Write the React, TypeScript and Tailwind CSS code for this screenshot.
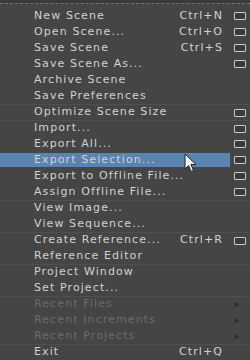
import React from "react";

interface Item {
  label: string;
  shortcut?: string;
  box?: boolean;
  sub?: boolean;
  disabled?: boolean;
  active?: boolean;
  sep?: boolean;
}

const items: Item[] = [
  { label: "New Scene", shortcut: "Ctrl+N", box: true },
  { label: "Open Scene...", shortcut: "Ctrl+O", box: true },
  { label: "Save Scene", shortcut: "Ctrl+S", box: true },
  { label: "Save Scene As...", box: true },
  { label: "Archive Scene" },
  { label: "Save Preferences" },
  { label: "Optimize Scene Size", box: true, sep: true },
  { label: "Import...", box: true, sep: true },
  { label: "Export All...", box: true },
  { label: "Export Selection...", box: true, active: true },
  { label: "Export to Offline File...", box: true },
  { label: "Assign Offline File...", box: true },
  { label: "View Image...", sep: true },
  { label: "View Sequence..." },
  { label: "Create Reference...", shortcut: "Ctrl+R", box: true, sep: true },
  { label: "Reference Editor" },
  { label: "Project Window", sep: true },
  { label: "Set Project..." },
  { label: "Recent Files", sub: true, disabled: true, sep: true },
  { label: "Recent Increments", sub: true, disabled: true },
  { label: "Recent Projects", sub: true, disabled: true },
  { label: "Exit", shortcut: "Ctrl+Q", sep: true },
];

function OptionBox() {
  return <div className="w-[12px] h-[8px] border-[1.5px] border-[#c8c8c8] bg-[#3a3a3a] rounded-[1px]" />;
}

function Cursor() {
  return (
    <svg className="absolute left-[184px] top-[153px]" width="14" height="20" viewBox="0 0 14 20">
      <path d="M1 1 L1 16 L4.5 12.5 L7 18.5 L9.5 17.5 L7 11.5 L12 11.5 Z" fill="#f4f4f4" stroke="#222" strokeWidth="1" />
    </svg>
  );
}

function Row({ item }: { item: Item }) {
  const text = item.disabled ? "text-[#6c6c6c]" : "text-[#d2d2d2]";
  return (
    <div className={`relative flex h-4 items-center ${item.sep ? "border-t border-[#505050]" : ""}`}>
      <div
        className={`flex h-[14px] w-[230px] items-center pl-[34px] pr-[7px] ${item.active ? "bg-[#5b83b1]" : ""}`}
      >
        <span className={`flex-1 whitespace-nowrap ${text}`}>{item.label}</span>
        {item.shortcut && <span className={`whitespace-nowrap ${text}`}>{item.shortcut}</span>}
      </div>
      <div className="flex w-[20px] items-center justify-center">
        {item.box && <OptionBox />}
        {item.sub && (
          <svg className="-ml-[6px]" width="4" height="5" viewBox="0 0 4 5">
            <path d="M0 0 L4 2.5 L0 5 Z" fill="#2a2a2a" />
          </svg>
        )}
      </div>
    </div>
  );
}

export default function App() {
  return (
    <div
      className="relative w-[250px] h-[360px] overflow-hidden bg-[#454545] text-[11px] tracking-[1.1px]"
      style={{ fontFamily: '"DejaVu Sans", Verdana, sans-serif' }}
    >
      <div className="h-[3px] bg-[#3a3a3a]" />
      <div className="h-[1px] border-t border-dashed border-[#747474]" />
      <div className="h-[4px]" />
      {items.map((it) => (
        <Row key={it.label} item={it} />
      ))}
      <Cursor />
    </div>
  );
}
